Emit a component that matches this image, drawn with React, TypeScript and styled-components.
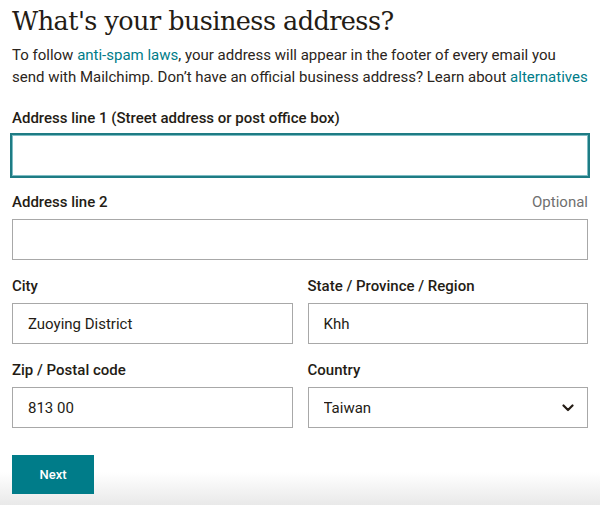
import styled, { createGlobalStyle } from 'styled-components'

const GlobalStyle = createGlobalStyle`
  html, body { margin: 0; padding: 0; height: 100%; }
  body {
    background: linear-gradient(to bottom, #fff 0, #fff 472px, #e9e9e9 505px);
    font-family: Roboto, "Liberation Sans", sans-serif;
    color: #241c15;
  }
  * { box-sizing: border-box; }
`

const Page = styled.div`
  padding: 2px 12px 0 12px;
  width: 600px;
`

const Heading = styled.h1`
  margin: 0;
  font-family: "DejaVu Serif", Georgia, serif;
  font-weight: 400;
  font-size: 25.5px;
  line-height: 38px;
  letter-spacing: -0.55px;
  color: #241c15;
`

const Intro = styled.p`
  margin: 4px 0 0;
  font-size: 15px;
  line-height: 22px;
  color: #2b2520;
`

const Link = styled.a`
  color: #007c89;
  text-decoration: none;
`

const Form = styled.form`
  margin-top: 20px;
  display: flex;
  flex-direction: column;
  gap: 16px;
`

const Row = styled.div`
  display: grid;
  grid-template-columns: 1fr 1fr;
  gap: 15px;
`

const Field = styled.div`
  display: flex;
  flex-direction: column;
  gap: 7px;
`

const LabelRow = styled.div`
  display: flex;
  justify-content: space-between;
  align-items: baseline;
  line-height: 20px;
`

const Label = styled.label`
  font-size: 15px;
  font-weight: 500;
  color: #241c15;
`

const Hint = styled.span`
  font-size: 15px;
  color: #6f6f6f;
`

const Input = styled.input<{ $focused?: boolean }>`
  height: 41px;
  width: 100%;
  padding: 0 15px;
  font-family: Roboto, "Liberation Sans", sans-serif;
  font-size: 15px;
  color: #241c15;
  background: #fff;
  border: 1px solid ${({ $focused }) => ($focused ? '#7fbdc4' : '#a8a8a8')};
  border-radius: 0;
  outline: none;
  box-shadow: ${({ $focused }) => ($focused ? '0 0 0 2px #1e7c84' : 'none')};
`

const SelectWrap = styled.div`
  position: relative;
`

const Select = styled.select`
  appearance: none;
  height: 41px;
  width: 100%;
  padding: 0 40px 0 15px;
  font-family: Roboto, "Liberation Sans", sans-serif;
  font-size: 15px;
  color: #241c15;
  background: #fff;
  border: 1px solid #a8a8a8;
  border-radius: 0;
  outline: none;
`

const Chevron = styled.svg`
  position: absolute;
  right: 14px;
  top: 50%;
  transform: translateY(-50%);
  pointer-events: none;
`

const Actions = styled.div`
  margin-top: 11px;
`

const Button = styled.button`
  width: 82px;
  height: 39px;
  border: none;
  border-radius: 0;
  background: #007c89;
  color: #fff;
  font-family: Roboto, "Liberation Sans", sans-serif;
  font-size: 13px;
  font-weight: 500;
  cursor: pointer;
`

export default function App() {
  return (
    <>
      <GlobalStyle />
      <Page>
        <Heading>What's your business address?</Heading>
        <Intro>
          To follow <Link href="#">anti-spam laws</Link>, your address will appear in the footer of every email you
          send with Mailchimp. Don’t have an official business address? Learn about <Link href="#">alternatives</Link>
        </Intro>
        <Form onSubmit={e => e.preventDefault()}>
          <Field>
            <LabelRow>
              <Label>Address line 1 (Street address or post office box)</Label>
            </LabelRow>
            <Input $focused defaultValue="" />
          </Field>
          <Field>
            <LabelRow>
              <Label>Address line 2</Label>
              <Hint>Optional</Hint>
            </LabelRow>
            <Input defaultValue="" />
          </Field>
          <Row>
            <Field>
              <LabelRow><Label>City</Label></LabelRow>
              <Input defaultValue="Zuoying District" />
            </Field>
            <Field>
              <LabelRow><Label>State / Province / Region</Label></LabelRow>
              <Input defaultValue="Khh" />
            </Field>
          </Row>
          <Row>
            <Field>
              <LabelRow><Label>Zip / Postal code</Label></LabelRow>
              <Input defaultValue="813 00" />
            </Field>
            <Field>
              <LabelRow><Label>Country</Label></LabelRow>
              <SelectWrap>
                <Select defaultValue="Taiwan">
                  <option>Taiwan</option>
                </Select>
                <Chevron width="12" height="8" viewBox="0 0 12 8" fill="none">
                  <path d="M1.5 1.5 6 6l4.5-4.5" stroke="#241c15" strokeWidth="2.2" strokeLinecap="round" strokeLinejoin="round" />
                </Chevron>
              </SelectWrap>
            </Field>
          </Row>
          <Actions>
            <Button type="submit">Next</Button>
          </Actions>
        </Form>
      </Page>
    </>
  )
}
